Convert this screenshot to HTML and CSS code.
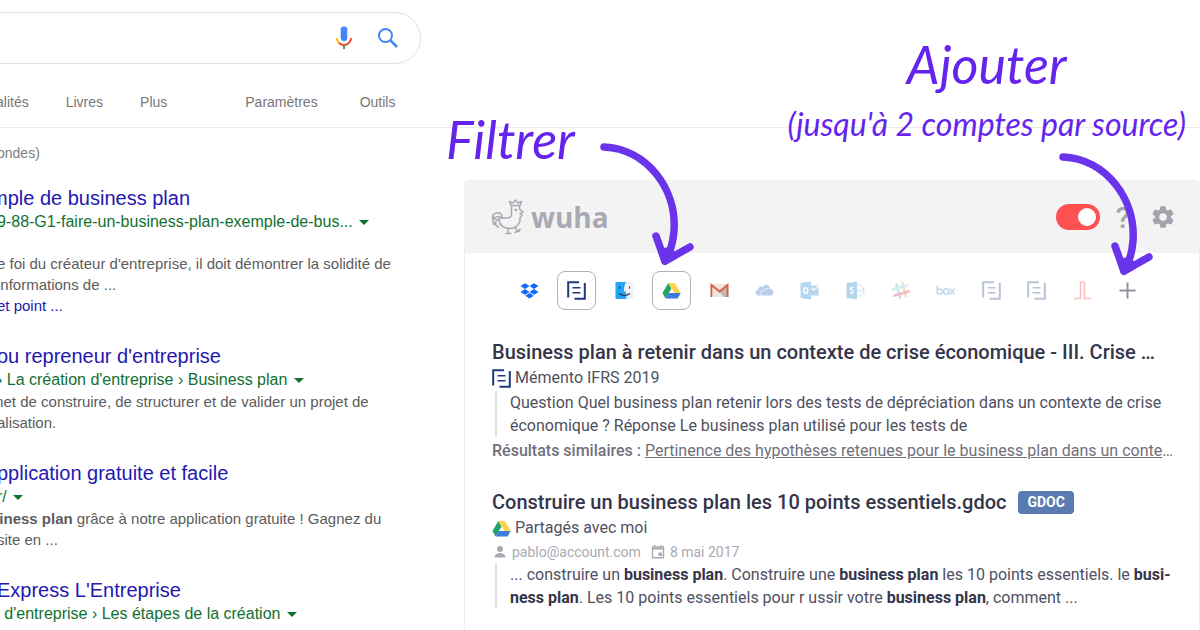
FILE: index.html
```html
<!DOCTYPE html>
<html lang="fr">
<head>
    <meta charset="UTF-8">
    <meta name="viewport" content="width=device-width, initial-scale=1.0">
    <link rel="stylesheet" href="styles.css">
    <title>Wuha - business plan</title>
</head>
<body>
    <!-- shared shapes -->
    <svg width="0" height="0" class="defs" aria-hidden="true">
        <symbol id="doc" viewBox="0 0 19 19">
            <g fill="none" stroke="#1f3a7a" stroke-width="2">
                <path d="M1.200 16.500V1.200H12"/>
                <path d="M17.800 2v15.800H7.500"/>
                <path d="M5.500 6.800h8M5.500 11.800h8" stroke-width="1.600"/>
            </g>
        </symbol>
        <symbol id="drive" viewBox="0 0 19 19">
            <path fill="#1fa463" d="M6.300 2 9.500 7.500 3.500 17.500.5 12z"/>
            <path fill="#ffd04b" d="M6.300 2h6.400l6 10h-6.200z"/>
            <path fill="#3b7ae0" d="M6.700 12h12l-3.100 5.500h-12z"/>
        </symbol>
        <symbol id="arrow" viewBox="0 0 96 126">
            <g fill="none" stroke="#6a35ea" stroke-width="7.500" stroke-linecap="round" stroke-linejoin="round">
                <path d="M5 6C48 8 78 48 75 90c-1 12-4 22-9 30"/>
                <path d="M57 95l9 25 25-14-25 14"/>
                <path fill="#6a35ea" d="M66 120l-3-9 7-1 5 5z"/>
            </g>
        </symbol>
    </svg>

    <header>
        <form class="search">
            <input type="text" aria-label="Recherche">
            <button type="button" aria-label="Recherche vocale">
                <svg width="24" height="24" viewBox="0 0 24 24">
                    <rect x="8.700" y="0.500" width="6.600" height="14.500" rx="3" fill="#4285f4"/>
                    <path d="M11 18.500h2V23h-2z" fill="#34a853"/>
                    <path d="M4.900 12c0 2.400 1 4 2.400 5.200" fill="none" stroke="#fbbc05" stroke-width="1.900"/>
                    <path d="M7 17c3 2.800 7 2.800 9.800 0 1.500-1.400 2.300-3 2.300-5" fill="none" stroke="#ea4335" stroke-width="1.900"/>
                </svg>
            </button>
            <button type="button" aria-label="Rechercher">
                <svg width="24" height="24" viewBox="0 0 24 24" fill="none" stroke="#4285f4">
                    <circle cx="9.500" cy="9.500" r="6.500" stroke-width="2"/>
                    <path d="M14.200 14.200l6.800 6.800" stroke-width="2.600"/>
                </svg>
            </button>
        </form>
        <nav>
            <a href="#">alités</a>
            <a href="#">Livres</a>
            <a href="#">Plus</a>
            <a href="#" class="tools">Paramètres</a>
            <a href="#">Outils</a>
        </nav>
    </header>

    <main>
        <section class="results">
            <p class="stats">ondes)</p>
            <article>
                <h3 class="cut"><a href="#">mple de business plan</a></h3>
                <cite>9-88-G1-faire-un-business-plan-exemple-de-bus... <i></i></cite>
                <p class="spaced">e foi du créateur d'entreprise, il doit démontrer la solidité de<br>informations de ...<br><a href="#">et point ...</a></p>
            </article>
            <article>
                <h3><a href="#">ou repreneur d'entreprise</a></h3>
                <cite>› La création d'entreprise › Business plan <i></i></cite>
                <p><span class="cut">met</span> de construire, de structurer et de valider un projet de<br>alisation.</p>
            </article>
            <article>
                <h3><a href="#">pplication gratuite et facile</a></h3>
                <cite>r/ <i></i></cite>
                <p><span class="cut"><b>siness plan</b></span> grâce à notre application gratuite ! Gagnez du<br>site en ...</p>
            </article>
            <article>
                <h3><a href="#">Express L'Entreprise</a></h3>
                <cite><span class="cut">n</span> d'entreprise › Les étapes de la création <i></i></cite>
            </article>
        </section>

        <section class="panel">
            <div class="panel-head">
                <svg width="34" height="36" viewBox="0 0 34 36" fill="none" stroke="#a9a9b3" stroke-width="1.500" stroke-linejoin="round" stroke-linecap="round">
                    <path d="M20 6.500l-1.500-4 3.500 1.500L24.500 1 27 4l3.500-1.500-1.500 4z"/>
                    <path d="M20.500 7v8c0 3-2 4-5 4h-4c0-4-3-6-6-5-3 .5-4.500 3-4 5.500l2-1.500c-2 2.500-2 5-.5 7.500l1.500-2c0 2.500 1 4 3 4.500"/>
                    <path d="M28.500 7v3l3.500 3-3 1.500 2 2-2 2v3c-1 5-5 8-10 8-6 0-10-3-11-8-.5-2 1-3 3.500-3"/>
                    <path d="M4 20c1-3 4-3.500 7-1M4.500 25c-.5-3 1-4.500 3.500-4.500"/>
                    <path d="M17 30v4M15 34.500h5M24 28l2 3.500M24 33.500l4-2M29 30l-1 2.500"/>
                    <circle cx="25" cy="11" r=".6"/>
                </svg>
                <span class="brand">wuha</span>
                <input type="checkbox" class="toggle" aria-label="Activer Wuha" checked>
                <button class="help" aria-label="Aide">?</button>
                <button aria-label="Réglages">
                    <svg width="26" height="26" viewBox="0 0 24 24" fill="#a3a3ad"><path d="M19.430 12.980c.04-.32.07-.64.07-.98s-.03-.66-.07-.98l2.110-1.650c.19-.15.24-.42.12-.64l-2-3.460c-.12-.22-.39-.3-.61-.22l-2.490 1c-.52-.4-1.080-.73-1.690-.98l-.38-2.650C14.460 2.180 14.250 2 14 2h-4c-.25 0-.46.18-.49.42l-.38 2.650c-.61.25-1.170.59-1.690.98l-2.490-1c-.23-.09-.49 0-.61.22l-2 3.460c-.13.22-.07.49.12.64l2.110 1.650c-.04.32-.07.65-.07.98s.03.66.07.98l-2.110 1.650c-.19.15-.24.42-.12.64l2 3.460c.12.22.39.3.61.22l2.490-1c.52.4 1.080.73 1.690.98l.38 2.650c.03.24.24.42.49.42h4c.25 0 .46-.18.49-.42l.38-2.650c.61-.25 1.170-.59 1.690-.98l2.490 1c.23.09.49 0 .61-.22l2-3.460c.12-.22.07-.49-.12-.64zM12 15.500A3.500 3.500 0 1 1 12 8.500a3.500 3.500 0 0 1 0 7z"/></svg>
                </button>
            </div>

            <div class="sources">
                <button aria-label="Dropbox"><svg viewBox="0 0 19 19" fill="#1668fb"><path d="M5 2.200l4.500 2.900L5 8 .5 5.100zM14 2.200l4.500 2.900L14 8 9.500 5.100zM5 8l4.500 2.900L5 13.800.5 10.900zM14 8l4.500 2.900-4.500 2.900-4.500-2.900zM9.500 12l4.300 2.800-4.300 2.700-4.300-2.700z"/></svg></button>
                <button class="active" aria-label="Mémento"><svg><use href="#doc"/></svg></button>
                <button aria-label="Finder"><svg viewBox="0 0 19 19">
                    <path fill="#f1f3f6" d="M9 1h9.500v17H9z"/>
                    <path fill="#25a5f5" d="M.5 1H11C9.500 4 9 7 8.800 10.500h2.200c0 3 .2 5 .6 7.500H.5z"/>
                    <path fill="none" stroke="#22364d" stroke-width="1.100" d="M4.500 5.500v2M14.500 5.500v2M4 12.500c3 2.600 8 2.600 11 0"/>
                </svg></button>
                <button class="active" aria-label="Google Drive"><svg><use href="#drive"/></svg></button>
                <button aria-label="Gmail"><svg viewBox="0 0 19 19">
                    <path fill="#ece8dc" d="M.5 3h18v13H.5z"/>
                    <path fill="#bdb9ae" d="M9.500 11L17 4v12h-3z"/>
                    <path fill="none" stroke="#dc5a50" stroke-width="1.800" d="M1.400 16V4l8.100 6.500L17.600 4v12"/>
                </svg></button>
                <button class="faded" aria-label="OneDrive"><svg viewBox="0 0 19 19"><path fill="#1d5cb8" d="M4 14.500C0 14.500-.5 9.500 3 9c0-3 3-4.500 5-3 2-3.500 7-2 7 2 4.500 0 4.500 6.500 1 6.500z"/><path d="M5.500 14.500c-1-3 1-5 3-4.500 1-2 2.500-3 5-2.500" fill="none" stroke="#fff" stroke-width=".8"/></svg></button>
                <button class="faded" aria-label="Outlook"><svg viewBox="0 0 19 19">
                    <path fill="#0a7cc8" d="M.5 2L11 .5v18L.5 17zM11 4.500h7.500v10H11z"/>
                    <path fill="none" stroke="#fff" stroke-width="1.200" d="M11.500 7l2.500 2L18.500 5"/>
                    <ellipse cx="5.700" cy="9.500" rx="2" ry="2.800" fill="none" stroke="#fff" stroke-width="1.500"/>
                </svg></button>
                <button class="faded" aria-label="SharePoint"><svg viewBox="0 0 19 19">
                    <path fill="#0a7cc8" d="M.5 2L11 .5v18L.5 17z"/>
                    <path fill="none" stroke="#fff" stroke-width="1.500" d="M7.600 7C5 5.700 3.500 8 5.500 9.200c2.500 1 2 4-1.500 2.800"/>
                    <g fill="none" stroke="#0a7cc8" stroke-dasharray="2 1"><circle cx="12.500" cy="9.500" r="5.500"/><circle cx="16.500" cy="9.500" r="1.600"/><path d="M11 9.500h4"/></g>
                </svg></button>
                <button class="faded" aria-label="Slack"><svg viewBox="0 0 19 19" fill="none" stroke-width="2.800" stroke-linecap="round">
                    <path stroke="#3eb991" d="M5.500 3.500l3.500 13.500"/><path stroke="#e9a820" d="M11.500 2L15 15.500"/>
                    <path stroke="#70cadb" d="M2 8.500l14-4"/><path stroke="#e01563" d="M3.500 14.500l14-4"/>
                </svg></button>
                <button class="faded" aria-label="Box"><svg viewBox="0 0 19 19" fill="none" stroke="#2486d2" stroke-width="1.500" stroke-linecap="round">
                    <path d="M1.200 5v5.500M14.500 8l3.700 5M18.200 8l-3.700 5"/><circle cx="3.700" cy="10.500" r="2.500"/><circle cx="10.300" cy="10.500" r="2.800"/>
                </svg></button>
                <button class="faded" aria-label="Mémento 2"><svg><use href="#doc"/></svg></button>
                <button class="faded" aria-label="Mémento 3"><svg><use href="#doc"/></svg></button>
                <button class="faded" aria-label="Jurisprudence"><svg viewBox="0 0 19 19" fill="none" stroke="#ee3340" stroke-width="1.500"><path d="M1 17.500h6.500V1M18 17.500h-6.500V1M7 1.200h5"/></svg></button>
                <button aria-label="Ajouter une source"><svg viewBox="0 0 19 19" stroke="#92929c" stroke-width="2"><path d="M9.500 1.500v16M1.500 9.500h16"/></svg></button>
            </div>

            <article class="hit">
                <h2>Business plan à retenir dans un contexte de crise économique - III. Crise …</h2>
                <div class="source"><svg><use href="#doc"/></svg>Mémento IFRS 2019</div>
                <blockquote>Question Quel business plan retenir lors des tests de dépréciation dans un contexte de crise<br>économique ? Réponse Le business plan utilisé pour les tests de</blockquote>
                <p class="similar"><b>Résultats similaires :</b> <a href="#">Pertinence des hypothèses retenues pour le business plan dans un conte</a>…</p>
            </article>
            <article class="hit">
                <h2>Construire un business plan les 10 points essentiels.gdoc <span class="tag">GDOC</span></h2>
                <div class="source"><svg><use href="#drive"/></svg>Partagés avec moi</div>
                <div class="meta">
                    <svg viewBox="0 0 16 16" fill="#a9a9b3"><circle cx="8" cy="5" r="3"/><path d="M2.500 13.500c0-6 11-6 11 0z"/></svg>
                    <span>pablo@account.com</span>
                    <svg viewBox="0 0 16 16" fill="none" stroke="#a9a9b3" stroke-width="1.400"><path d="M2.500 3h11v10.800h-11zM2.500 4.800h11M4.800 1v2M11.200 1v2"/><path fill="#a9a9b3" stroke="none" d="M8.500 8.500h3.500v3.500H8.500z"/></svg>
                    <span>8 mai 2017</span>
                </div>
                <blockquote>... construire un <b>business plan</b>. Construire une <b>business plan</b> les 10 points essentiels. le <b>busi-</b><br><b>ness plan</b>. Les 10 points essentiels pour r ussir votre <b>business plan</b>, comment ...</blockquote>
            </article>
        </section>
    </main>

    <!-- notes over the page -->
    <div class="note filter">Filtrer</div>
    <svg class="arrow arrow-filter"><use href="#arrow"/></svg>
    <div class="note add">Ajouter<small>(jusqu'à 2 comptes par source)</small></div>
    <svg class="arrow arrow-add"><use href="#arrow"/></svg>
</body>
</html>
```

FILE: styles.css
```css
* {
    box-sizing: border-box;
}
body {
    position: relative;
    margin: 0;
    min-height: 100vh;
    overflow: hidden;
    background-color: #fff;
    font-family: "Liberation Sans", Arial, sans-serif;
    font-size: 14px;
    color: #5c5c5c;
}
h2, h3, p, blockquote {
    margin: 0;
    font-weight: normal;
}
a {
    text-decoration: none;
}
button {
    padding: 0;
    border: none;
    background: none;
    cursor: pointer;
}
svg {
    display: block;
    flex: none;
}
.defs {
    position: absolute;
}

/* search bar */
.search {
    display: flex;
    align-items: center;
    gap: 20px;
    width: 451px;
    height: 52px;
    margin: 12px 0 0 -30px;
    padding-right: 20px;
    border: 1px solid #dfe1e5;
    border-radius: 26px;
}
.search input {
    flex: 1;
    min-width: 0;
    border: none;
    outline: none;
}
.search button {
    width: 24px;
}
nav {
    display: flex;
    align-items: center;
    gap: 37px;
    height: 64px;
    margin-left: -4px;
    padding-top: 12px;
    border-bottom: 1px solid #ebebeb;
}
nav a {
    color: #777;
}
.tools {
    margin: 0 5px 0 41px;
}

/* result list */
main {
    display: flex;
}
.results {
    width: 464px;
    flex: none;
    margin-left: -3px;
    white-space: nowrap;
}
.stats {
    margin: 14px 0 21px;
    line-height: 22px;
    color: #808080;
}
.results article {
    margin-bottom: 27px;
    font-size: 15px;
    line-height: 21px;
}
.results h3 {
    font-size: 20px;
    line-height: 26px;
}
.results a {
    color: #2318b0;
}
.results .cut {
    margin-left: -6px;
}
.results cite {
    display: block;
    font-style: normal;
    font-size: 16px;
    line-height: 22px;
    color: #117030;
}
cite i {
    display: inline-block;
    margin-left: 2px;
    vertical-align: 2px;
    border: 5px solid transparent;
    border-top-color: #117030;
    border-bottom: none;
}
.spaced {
    margin-top: 20px;
}

/* wuha panel */
.panel {
    flex: 1;
    min-width: 0;
    margin-top: 52px;
    margin-left: 3px;
    border: 1px solid #efeff0;
    border-radius: 5px 5px 0 0;
    font-family: Roboto, sans-serif;
    font-size: 16px;
    color: #50505f;
}
.panel-head {
    display: flex;
    align-items: center;
    height: 72px;
    padding: 0 23px 0 26px;
    background-color: #f3f3f3;
}
.brand {
    flex: 1;
    margin-left: 6px;
    font: bold 28px "Open Sans", sans-serif;
    color: #a9a9b3;
}
.toggle {
    appearance: none;
    width: 44px;
    height: 26px;
    margin: 0 14px 0 0;
    padding: 4px;
    border-radius: 13px;
    background-color: #ff5052;
}
.toggle::before {
    content: "";
    display: block;
    width: 18px;
    height: 18px;
    margin-left: 18px;
    border-radius: 50%;
    background-color: #fff;
}
.help {
    width: 18px;
    margin-right: 18px;
    font: 500 30px Roboto, sans-serif;
    color: #a3a3ad;
}
.sources {
    display: flex;
    align-items: center;
    justify-content: space-between;
    margin: 18px 62px 29px 55px;
}
.sources button {
    width: 19px;
}
.sources svg, .source svg {
    width: 19px;
    height: 19px;
}
.sources .active {
    display: flex;
    align-items: center;
    justify-content: center;
    width: 39px;
    height: 39px;
    margin: 0 -8px;
    border: 1px solid #b0b0b8;
    border-radius: 8px;
}
.faded {
    opacity: .3;
}
.hit {
    margin: 0 27px 25px;
    white-space: nowrap;
}
.hit h2 {
    display: flex;
    align-items: center;
    font-size: 20px;
    font-weight: 500;
    line-height: 26px;
    color: #35354a;
}
.tag {
    margin-left: 12px;
    padding: 0 9px;
    border-radius: 4px;
    background-color: #587bb0;
    font-size: 14px;
    font-weight: bold;
    line-height: 23px;
    color: #fff;
}
.source {
    display: flex;
    align-items: center;
    gap: 4px;
    line-height: 26px;
}
.meta {
    display: flex;
    align-items: center;
    gap: 4px;
    font-size: 14px;
    line-height: 22px;
    color: #a9a9b3;
}
.meta svg {
    width: 16px;
    height: 16px;
}
.meta span {
    margin-right: 5px;
}
.hit blockquote {
    margin-left: 3px;
    padding-left: 13px;
    border-left: 2px solid #e4e4e6;
    line-height: 23px;
}
.hit blockquote b {
    color: #35354a;
}
.similar {
    line-height: 27px;
    color: #70707c;
}
.similar b {
    font-weight: 500;
}
.similar a {
    color: #70707c;
    text-decoration: underline;
}

/* handwritten notes */
.note {
    position: absolute;
    font-family: Lato, sans-serif;
    font-size: 52px;
    font-style: italic;
    line-height: 60px;
    text-align: center;
    white-space: nowrap;
    color: #6524ee;
}
.note small {
    display: block;
    font-size: 32px;
    line-height: 60px;
}
.filter {
    top: 109px;
    left: 446px;
}
.add {
    top: 34px;
    right: 14px;
}
.arrow {
    position: absolute;
    width: 96px;
    height: 126px;
}
.arrow-filter {
    top: 141px;
    left: 599px;
}
.arrow-add {
    top: 151px;
    right: 46px;
}
```
